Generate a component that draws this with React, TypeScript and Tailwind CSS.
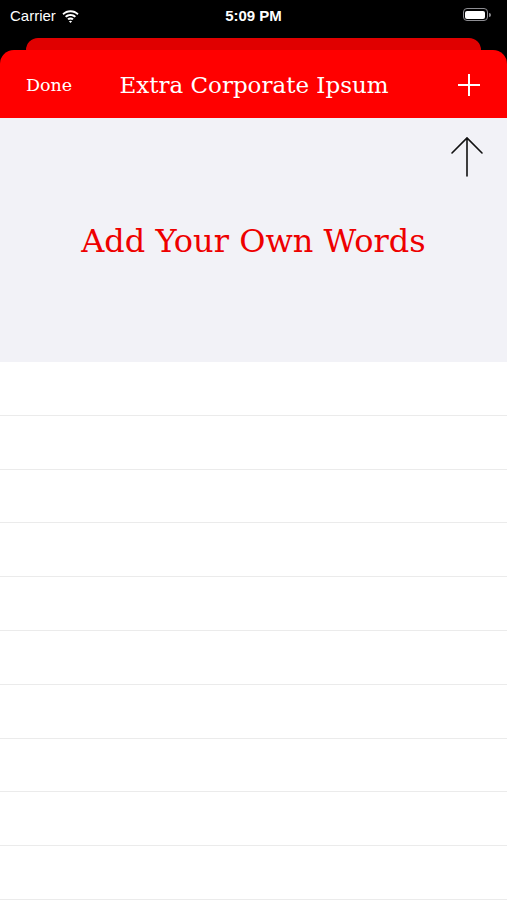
const StatusBar = () => (
  <div className="h-[38px] flex items-start justify-between px-[10px] pt-[5px] text-white font-['Liberation_Sans',sans-serif]">
    <div className="flex items-center gap-[6px] text-[15px] w-[120px]">
      <span>Carrier</span>
      <svg width="17" height="13" viewBox="0 0 17 13" fill="white">
        <path d="M8.5 2.2c2.6 0 5 1 6.8 2.7l1.3-1.4C14.4 1.4 11.6.2 8.5.2S2.6 1.4.4 3.5l1.3 1.4C3.5 3.2 5.9 2.2 8.5 2.2z" />
        <path d="M8.5 5.9c1.6 0 3.1.6 4.2 1.7l1.3-1.4C12.6 4.8 10.6 4 8.5 4s-4.1.8-5.5 2.2l1.3 1.4c1.1-1.1 2.6-1.7 4.2-1.7z" />
        <path d="M8.5 9.4c.7 0 1.3.3 1.8.7l1.4-1.4C10.8 7.9 9.7 7.5 8.5 7.5s-2.3.4-3.2 1.2l1.4 1.4c.5-.4 1.1-.7 1.8-.7zM8.5 13l1.6-1.7c-.4-.4-1-.6-1.6-.6s-1.2.2-1.6.6z" />
      </svg>
    </div>
    <span className="text-[15px] font-semibold">5:09 PM</span>
    <div className="w-[120px] flex justify-end pt-[3px] pr-[6px]">
      <div className="flex items-center">
        <div className="w-[25px] h-[13px] rounded-[4px] border border-[#8e8e93] p-[1.5px]">
          <div className="w-full h-full rounded-[2px] bg-white" />
        </div>
        <div className="w-[2px] h-[4px] rounded-r-sm bg-[#8e8e93] ml-[1px]" />
      </div>
    </div>
  </div>
);

const rows = Array.from({ length: 10 });

export default function App() {
  return (
    <div className="w-[507px] h-[900px] overflow-hidden bg-black flex flex-col font-['DejaVu_Serif',serif]">
      <StatusBar />
      <div className="mx-[26px] h-[12px] rounded-t-[12px] bg-[#e00000]" />
      <div className="h-[68px] rounded-t-[14px] bg-[#ff0000] flex items-center pl-[26px] pr-[27px] pt-[2px] text-white">
        <span className="text-[17.5px] w-[80px]">Done</span>
        <span className="flex-1 text-center text-[23px] pl-[2px]">Extra Corporate Ipsum</span>
        <div className="w-[80px] flex justify-end">
          <svg width="22" height="22" viewBox="0 0 22 22" stroke="white" strokeWidth="2">
            <path d="M11 0v22M0 11h22" />
          </svg>
        </div>
      </div>
      <div className="h-[244px] bg-[#f2f2f7] relative flex items-center justify-center">
        <svg className="absolute right-[23px] top-[18px]" width="34" height="42" viewBox="0 0 34 42" fill="none" stroke="#111" strokeWidth="1.6" strokeLinecap="round">
          <path d="M17 2v38M2 17 17 2l15 15" />
        </svg>
        <span className="text-[#ee0000] text-[32px] pt-[2px]">Add Your Own Words</span>
      </div>
      <div className="flex-1 bg-white">
        {rows.map((_, i) => (
          <div key={i} className="h-[53.8px] border-b border-[#ebebeb]" />
        ))}
      </div>
    </div>
  );
}
